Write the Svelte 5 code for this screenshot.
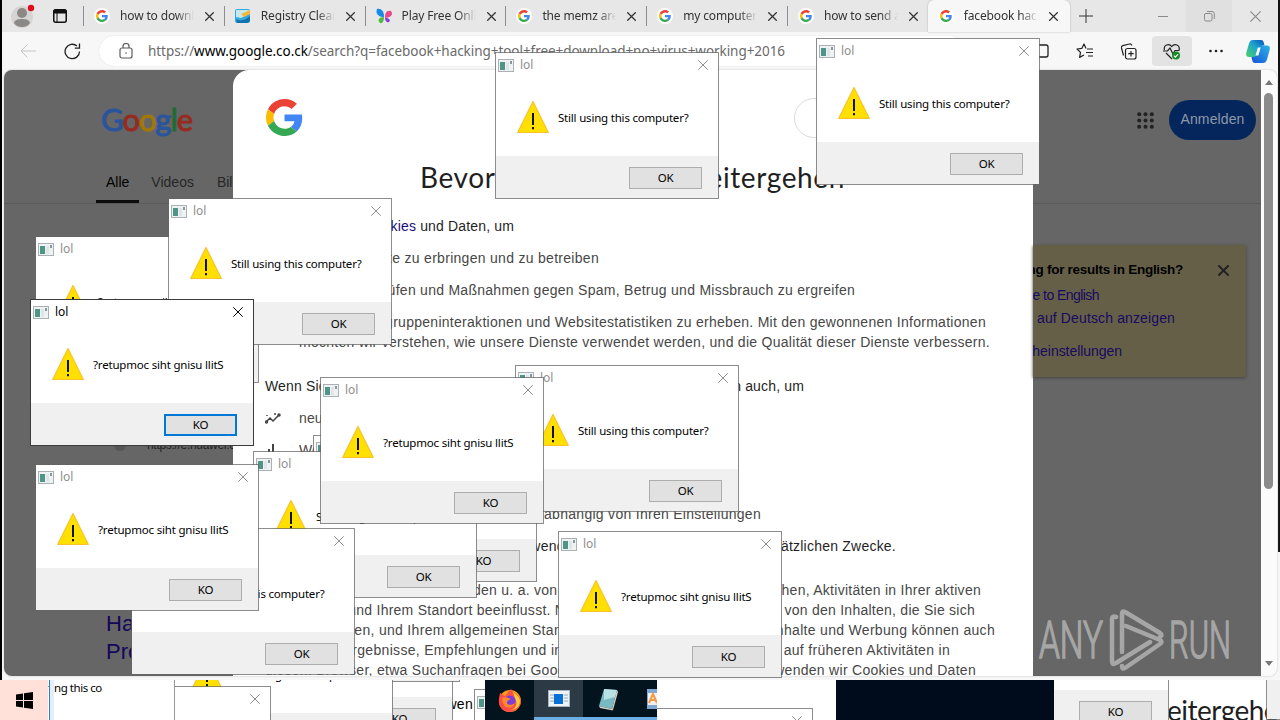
<script lang="ts">
  interface Tab {
    title: string;
    icon: 'google' | 'registry' | 'msn';
    active?: boolean;
  }

  interface Dialog {
    x: number;
    y: number;
    reversed?: boolean;
    focused?: boolean;
  }

  const tabs: Tab[] = [
    { title: 'how to download', icon: 'google' },
    { title: 'Registry Cleaner', icon: 'registry' },
    { title: 'Play Free Online', icon: 'msn' },
    { title: 'the memz are real', icon: 'google' },
    { title: 'my computer is', icon: 'google' },
    { title: 'how to send a virus', icon: 'google' },
    { title: 'facebook hacking', icon: 'google', active: true }
  ];

  // bottom to top
  const dialogs: Dialog[] = [
    { x: 35, y: 236, reversed: true },
    { x: 168, y: 198 },
    { x: 30, y: 299, reversed: true, focused: true },
    { x: 313, y: 435, reversed: true },
    { x: 515, y: 365 },
    { x: 253, y: 451 },
    { x: 320, y: 377, reversed: true },
    { x: 131, y: 528 },
    { x: 35, y: 464, reversed: true },
    { x: 558, y: 531, reversed: true },
    { x: 495, y: 52 },
    { x: 816, y: 38 }
  ];

  const firstList = [
    [{ text: 'Google-Dienste zu erbringen und zu betreiben', w: 300 }],
    [{ text: 'Ausfälle zu prüfen und Maßnahmen gegen Spam, Betrug und Missbrauch zu ergreifen', w: 556 }],
    [
      { text: 'Daten zu Zielgruppeninteraktionen und Websitestatistiken zu erheben. Mit den gewonnenen Informationen', w: 687 },
      { text: 'möchten wir verstehen, wie unsere Dienste verwendet werden, und die Qualität dieser Dienste verbessern.', w: 691 }
    ]
  ];

  const secondList = [
    { text: 'neue Dienste zu entwickeln und zu verbessern', w: 296 },
    { text: 'Werbung auszuliefern und ihre Wirksamkeit zu messen', w: 350 },
    { text: 'personalisierte Inhalte anzuzeigen, abhängig von Ihren Einstellungen', w: 438 },
    { text: 'personalisierte Werbung anzuzeigen, abhängig von Ihren Einstellungen', w: 462 }
  ];

  const details = [
    { text: 'Nicht personalisierte Inhalte werden u. a. von Inhalten, die Sie sich gerade ansehen, Aktivitäten in Ihrer aktiven', w: 716 },
    { text: 'Suchsitzung und Ihrem Standort beeinflusst. Nicht personalisierte Werbung wird von den Inhalten, die Sie sich', w: 710 },
    { text: 'gerade ansehen, und Ihrem allgemeinen Standort beeinflusst. Personalisierte Inhalte und Werbung können auch', w: 730 },
    { text: 'relevantere Ergebnisse, Empfehlungen und individuelle Werbung enthalten, die auf früheren Aktivitäten in', w: 685 },
    { text: 'diesem Browser, etwa Suchanfragen bei Google, basieren. Darüber hinaus verwenden wir Cookies und Daten', w: 711 }
  ];

  // spreads a line of text over a given width
  function fit(node: HTMLElement, width: number) {
    const n = (node.textContent ?? '').trim().length;
    const natural = node.getBoundingClientRect().width;
    node.style.letterSpacing = (width - natural) / n + 'px';
  }
</script>

{#snippet googleG(size: number)}
  <svg width={size} height={size} viewBox="2 2 44 44">
    <path fill="#ea4335" d="M24 9.5c3.5 0 6.7 1.2 9.2 3.6l6.9-6.9C35.9 2.4 30.5 0 24 0 14.6 0 6.5 5.4 2.6 13.2l8 6.2C12.400 13.700 17.700 9.500 24 9.500z" transform="translate(2 2) scale(.917)" />
    <path fill="#4285f4" d="M47 24.600c0-1.600-.2-3.100-.4-4.600H24v9h12.900c-.6 3-2.200 5.500-4.700 7.200l7.700 6c4.500-4.200 7.100-10.400 7.100-17.600z" transform="translate(2 2) scale(.917)" />
    <path fill="#fbbc05" d="M10.500 28.600c-.5-1.500-.8-3-.8-4.600s.3-3.100.8-4.600l-8-6.200C.9 16.500 0 20.100 0 24s.9 7.500 2.600 10.800z" transform="translate(2 2) scale(.917)" />
    <path fill="#34a853" d="M24 48c6.500 0 11.900-2.100 15.900-5.800l-7.700-6c-2.200 1.400-4.900 2.300-8.200 2.300-6.300 0-11.600-4.200-13.500-9.900l-8 6.200C6.500 42.600 14.600 48 24 48z" transform="translate(2 2) scale(.917)" />
  </svg>
{/snippet}

{#snippet cross(size: number)}
  <svg width={size} height={size} viewBox="0 0 10 10" fill="none" stroke="currentColor">
    <path d="M.3.3l9.400 9.400M9.700.3L.3 9.700" />
  </svg>
{/snippet}

{#snippet dialog(d: Dialog)}
  <div class="dialog" class:focused={d.focused} style="left:{d.x}px;top:{d.y}px">
    <div class="titlebar">
      <svg width="16" height="13" viewBox="0 0 16 13">
        <rect x=".5" y=".5" width="15" height="12" fill="#eef2f2" stroke="#a9b1b4" />
        <rect x="2" y="3" width="5" height="8" fill="#4f9486" />
        <rect x="8" y="3" width="3" height="8" fill="#dfe6e8" />
        <rect x="12" y="2" width="2" height="3" fill="#8d979b" />
      </svg>
      <span class="caption">lol</span>
      {@render cross(10)}
    </div>
    <div class="message">
      <svg width="34" height="34" viewBox="0 0 34 34">
        <path d="M17 1.500L32.300 32.500H1.700z" fill="#ffe000" stroke="#f9c22b" stroke-width="1.200" stroke-linejoin="round" />
        <path d="M16 13h2v12h-2zM16 27h2v2.200h-2z" fill="#111" />
      </svg>
      <span use:fit={130.5}>{d.reversed ? '?retupmoc siht gnisu llitS' : 'Still using this computer?'}</span>
    </div>
    <div class="actions">
      <button>{d.reversed ? 'KO' : 'OK'}</button>
    </div>
  </div>
{/snippet}

<div class="desktop">
  <div class="browser">
    <div class="tabstrip">
      <div class="profile">
        <svg width="24" height="24" viewBox="0 0 24 24">
          <circle cx="11" cy="13" r="11" fill="#d6d4d2" />
          <circle cx="11" cy="9" r="5" fill="#8b8886" />
          <path d="M3 19c1-3.500 4-4 8-4s7 .5 8 4c-2 3-5 4-8 4s-6-1-8-4z" fill="#8b8886" />
          <circle cx="20" cy="4" r="3.200" fill="#e00b1c" />
        </svg>
      </div>
      <svg class="workspace" width="14" height="14" viewBox="0 0 14 14">
        <rect x=".75" y=".75" width="12.500" height="12.500" rx="2" fill="none" stroke="#111" stroke-width="1.500" />
        <path d="M1 1h12v3H1zM4 3v10" stroke="#111" fill="#111" />
      </svg>
      {#each tabs as tab}
        <div class="tab" class:active={tab.active}>
          <span class="favicon" class:round={tab.icon === 'google'}>
            {#if tab.icon === 'google'}
              {@render googleG(12)}
            {:else if tab.icon === 'registry'}
              <svg width="16" height="16" viewBox="0 0 16 16">
                <rect y="1" width="15" height="14" rx="2" fill="#35a9dc" />
                <path d="M1 2h13v4L6 10 1 9z" fill="#c3e9ee" />
                <path d="M6 6l9-4v4l-6 3z" fill="#f4b63c" />
                <path d="M1 11c5 3 9 1 14-3v5l-3 2H2z" fill="#1173ad" />
              </svg>
            {:else}
              <svg width="16" height="16" viewBox="0 0 16 16">
                <path d="M1 1c5-1 7 3 7 8C3 9-1 6 1 1z" fill="#168be6" />
                <path d="M15 3c-5-1-6 3-6 7 5 0 9-3 6-7z" fill="#e64a8b" />
                <path d="M8 9c-5 0-7 3-4 6 3 1 4-3 4-6z" fill="#55b944" />
                <path d="M9 10c4 0 6 2 4 4-2 1-4-1-4-4z" fill="#7a43d1" />
              </svg>
            {/if}
          </span>
          <span class="tab-title">{tab.title}</span>
          {@render cross(9)}
        </div>
      {/each}
      <svg class="new-tab" width="14" height="14" viewBox="0 0 14 14"><path d="M7 0v14M0 7h14" stroke="#333" /></svg>
      <div class="window-buttons">
        <span><svg width="10" height="10" viewBox="0 0 10 10"><path d="M0 5.500h10" stroke="#8a8a8a" /></svg></span>
        <span class="hover">
          <svg width="11" height="11" viewBox="0 0 11 11" fill="none" stroke="#8a8a8a">
            <rect x=".5" y="2.500" width="7.500" height="7.500" rx="1.500" />
            <path d="M3 .5h5a2.200 2.200 0 0 1 2.300 2.200V8" />
          </svg>
        </span>
        <span class="close">{@render cross(11)}</span>
      </div>
    </div>

    <div class="toolbar">
      <svg class="back" width="16" height="14" viewBox="0 0 16 14" fill="none" stroke="#c6c6c6"><path d="M7.500.5L1 7l6.500 6.500M1 7h15" /></svg>
      <svg class="reload" width="17" height="17" viewBox="0 0 17 17" fill="none" stroke="#222" stroke-width="1.300">
        <path d="M15.500 8.500A7.200 7.200 0 1 1 13 3M15.500.5v4.700h-4.700" />
      </svg>
      <div class="address">
        <svg width="14" height="16" viewBox="0 0 14 16" fill="none" stroke="#5c5c5c" stroke-width="1.200">
          <rect x="1" y="5" width="12" height="10" rx="2" />
          <path d="M4 5V3.500a3 3 0 0 1 6 0V5" />
          <circle cx="7" cy="10" r=".8" fill="#5c5c5c" stroke="none" />
        </svg>
        <span class="url" use:fit={637}>https://<b>www.google.co.ck</b>/search?q=facebook+hacking+tool+free+download+no+virus+working+2016</span>
      </div>
      <div class="tools">
        <svg width="16" height="14" viewBox="0 0 16 14" fill="none" stroke="#222" stroke-width="1.300"><rect x="1" y="1" width="14" height="12" rx="2" /></svg>
        <svg width="18" height="16" viewBox="0 0 18 16" fill="none" stroke="#222" stroke-width="1.200" stroke-linejoin="round">
          <path d="M10 5.500L8 1 5.800 5.400 1 6l3.500 3.400-.9 5L8 12M11 6h6M10 9.500h7M12 13h5" />
        </svg>
        <svg width="17" height="17" viewBox="0 0 17 17" fill="none" stroke="#222" stroke-width="1.200" stroke-linejoin="round">
          <rect x="5.500" y="5.500" width="10.500" height="10.500" rx="2" />
          <path d="M11 8v5.500M8.200 10.700h5.500M3.500 12.500L1.500 5c-.3-1.300.2-2 1.300-2.300L9.500 1c1.200-.3 2 .3 2.300 1.500" />
        </svg>
        <span class="essentials">
          <svg width="18" height="17" viewBox="0 0 18 17" fill="none" stroke="#222" stroke-width="1.200">
            <path d="M1.500 7C0 2 6 0 8.800 3.500 11.500 0 17.500 2 16 7M3 10l6 6M0 8h4.500L7 5l3 6 2-3.500h4.500" />
            <circle cx="13" cy="12.500" r="4" fill="#178a2a" stroke="none" />
            <path d="M11 12.700l1.400 1.400 2.700-2.900" stroke="#fff" stroke-width="1.100" />
          </svg>
        </span>
        <svg width="14" height="4" viewBox="0 0 14 4" fill="#222"><circle cx="1.500" cy="2" r="1.300" /><circle cx="7" cy="2" r="1.300" /><circle cx="12.500" cy="2" r="1.300" /></svg>
        <svg width="24" height="23" viewBox="0 0 24 23">
          <defs>
            <linearGradient id="cp1" x1="1" y1="0" x2="0" y2="1">
              <stop offset="0" stop-color="#0a4fc4" /><stop offset=".45" stop-color="#1ba6c9" /><stop offset="1" stop-color="#4fd06a" />
            </linearGradient>
            <linearGradient id="cp2" x1="1" y1="0" x2="0" y2="1">
              <stop offset="0" stop-color="#2cb5e4" /><stop offset="1" stop-color="#1752d8" />
            </linearGradient>
          </defs>
          <path d="M7 0h8c2 0 2.500 1.500 3 3.500l.5 2c-3 0-4 .5-5 4l-1.500 5c-.8 2-2 2.500-4 2.500H3c-3 0-3.300-2.300-2.500-5L3 3.500C3.800 1 5 0 7 0z" fill="url(#cp1)" />
          <path d="M17 23H9c-2 0-2.500-1.500-3-3.500L5.500 17c3.500 0 5-.5 6-4l1.500-4.500c.8-2 2-3 4-3h4c3 0 3.300 2.300 2.500 5l-2.500 9c-.8 2.500-2 3.500-4 3.500z" fill="url(#cp2)" />
          <path d="M9.500 15.500l2.300-8h2.900l-2.300 8z" fill="#f5fbff" />
        </svg>
      </div>
    </div>

    <div class="content">
      <div class="page">
        <div class="results">
          <div class="logo" use:fit={91}><i class="b">G</i><i class="r">o</i><i class="y">o</i><i class="b">g</i><i class="g">l</i><i class="r">e</i></div>
          <nav><span class="on">Alle</span><span>Videos</span><span>Bilder</span></nav>
          <div class="hit">
            <span class="hit-icon"></span>
            <span class="hit-url" use:fit={104}>https://e.huawei.com</span>
          </div>
          <h3>Hacking</h3>
          <h3>Programm</h3>
        </div>
        <section class="consent">
          <header>
            {@render googleG(37)}
            <span class="lang"></span>
          </header>
          <h1><span use:fit={425}>Bevor Sie zu Google weitergehen</span></h1>
          <p class="line"><span use:fit={249}>Wir verwenden <a href="#cookies">Cookies</a> und Daten, um</span></p>
          <ul>
            {#each firstList as item}
              <li>{#each item as line}<div class="line"><span use:fit={line.w}>{line.text}</span></div>{/each}</li>
            {/each}
          </ul>
          <p class="line spaced"><span use:fit={539}>Wenn Sie „Alle akzeptieren“ auswählen, verwenden wir Cookies und Daten auch, um</span></p>
          <ul>
            {#each secondList as item, i}
              <li>
                {#if i === 0}
                  <svg class="bullet" width="16" height="12" viewBox="0 0 16 12" fill="none" stroke="#444" stroke-width="1.500"><path d="M1 10l4-4 3 3 6-6M10 1v2M2 3v1" /><circle cx="1.500" cy="10" r="1" /><circle cx="14" cy="3" r="1" /></svg>
                {:else if i === 1}
                  <svg class="bullet" width="16" height="12" viewBox="0 0 16 12" fill="#444"><path d="M3 5h2v7H3zM7 0h2v12H7zM11 8h2v4h-2z" /></svg>
                {/if}
                <div class="line"><span use:fit={item.w}>{item.text}</span></div>
              </li>
            {/each}
          </ul>
          <p class="line after"><span use:fit={631}>Wenn Sie „Alle ablehnen“ auswählen, verwenden wir Cookies nicht für diese zusätzlichen Zwecke.</span></p>
          <div class="details">
            {#each details as line}
              <div class="line"><span use:fit={line.w}>{line.text}</span></div>
            {/each}
          </div>
        </section>
        <aside>
          <div class="account">
            <svg width="17" height="17" viewBox="0 0 17 17" fill="#222">
              {#each [2.2, 8.5, 14.800] as cy}
                {#each [2.2, 8.5, 14.800] as cx}
                  <circle {cx} {cy} r="2" />
                {/each}
              {/each}
            </svg>
            <span class="signin"><span use:fit={64}>Anmelden</span></span>
          </div>
          <div class="language">
            <div class="question">
              <span use:fit={190}>Looking for results in English?</span>
              {@render cross(11)}
            </div>
            <div class="first"><span use:fit={105}>Change to English</span></div>
            <div class="second"><span use:fit={183}>Weiter auf Deutsch anzeigen</span></div>
            <div class="third"><span use:fit={126}>Spracheinstellungen</span></div>
          </div>
          <svg class="watermark" width="194" height="64" viewBox="0 0 194 64">
            <text x="0" y="49" textLength="64" lengthAdjust="spacingAndGlyphs">ANY</text>
            <text x="130" y="49" textLength="62" lengthAdjust="spacingAndGlyphs">RUN</text>
            <path d="M77 8c-3-1-4 0-4 2v42c0 3 1 4 4 2l34-21M83 43V5c0-3 1-3 3-2l35 21c2 1 2 3 0 4M87 17l34 14c2 1 2 3 0 4L86 59c-2 1-3 1-3-2" />
          </svg>
        </aside>
      </div>
      <div class="scrollbar">
        <i class="up"></i>
        <i class="thumb"></i>
        <i class="down"></i>
      </div>
    </div>
  </div>

  <div class="taskbar">
    <div class="start">
      <svg width="17" height="17" viewBox="0 0 17 17"><path d="M0 2.500l7-1V8H0zM8 1.300L17 0v8H8zM0 9h7v6.500l-7-1zM8 9h9v8l-9-1.300z" /></svg>
    </div>
    <div class="slice tangled">
      <span class="under">verwen</span>
      {@render dialog({ x: 181, y: -87, reversed: true })}
      {@render dialog({ x: 188, y: -145 })}
      {@render dialog({ x: 121, y: -71 })}
      {@render dialog({ x: -1, y: 6 })}
      {@render dialog({ x: 426, y: 9 })}
      <div class="fragment"><span>ng this co</span></div>
    </div>
    <div class="slice apps">
      <span>
        <svg width="24" height="24" viewBox="0 0 24 24">
          <circle cx="12" cy="13" r="11" fill="#ff9b1f" />
          <path d="M2 5c3 1 4 3 5 3 2-1 3-4 6-7 1 4 9 5 10 12-1 8-7 11-12 11C4 24 0 18 1 11z" fill="#ff4f45" />
          <path d="M14 2c1 4 8 5 8 11s-5 9-9 9c5-2 7-6 4-12z" fill="#ffc93b" />
          <circle cx="12" cy="13" r="5.500" fill="#7a3fd8" />
          <path d="M4 10c4-2 6 0 9 1-2 1-3 1-4 3-1 3 5 4 8 1-1 5-10 7-12 0z" fill="#ff8a2a" />
        </svg>
      </span>
      <span class="running current">
        <svg width="22" height="17" viewBox="0 0 22 17">
          <rect x=".5" y=".5" width="21" height="16" fill="#eef3f8" stroke="#a7b4c0" />
          <path d="M2 5h4M2 8h4M2 11h4M16 5h4M16 8h4M16 11h4" stroke="#9ab" />
          <rect x="6" y="4" width="9" height="10" fill="#0a6fd6" />
        </svg>
      </span>
      <span class="running">
        <svg width="24" height="24" viewBox="0 0 24 24">
          <path d="M8 2l13 1-5 19-13-3z" fill="#79b9c4" />
          <path d="M8 2l13 1-2 7-11 3z" fill="#b9e0e4" />
          <path d="M3 19l13 3 1 1.500L4 21zM21 3l1 2-5 18-1-1z" fill="#d8d3c2" />
        </svg>
      </span>
      <span class="running last">
        <svg width="18" height="20" viewBox="0 0 18 20">
          <rect width="18" height="20" fill="#7ea8d2" />
          <rect x="1" y="4" width="16" height="12" fill="#f4f1ec" />
          <path d="M2 14l4-9 4 9M3.500 11h5" stroke="#f09a4a" stroke-width="2" fill="none" />
        </svg>
      </span>
    </div>
    <div class="slice gap">{@render dialog({ x: -68, y: 28 })}</div>
    <div class="slice empty"></div>
    <div class="slice ko">{@render dialog({ x: -109, y: -94, reversed: true })}</div>
    <div class="slice tail">
      <span class="heading-bit">eitergehen</span>
      {@render dialog({ x: 97, y: -107 })}
    </div>
  </div>

  {#each dialogs as d}
    {@render dialog(d)}
  {/each}
</div>

<style>
  :global(body) { overflow: hidden; }

  .desktop {
    position: relative;
    display: flex;
    flex-direction: column;
    width: 1280px;
    height: 720px;
    overflow: hidden;
    background: #fff;
    font-family: 'Noto Sans', 'Open Sans', sans-serif;
    font-size: 12px;
  }
  svg { display: block; flex: none; }
  i { font-style: normal; }

  .browser {
    display: flex;
    flex-direction: column;
    height: 680px;
    box-sizing: border-box;
    padding: 0 2px;
    background:
      linear-gradient(#000, #000) left / 2px 100% no-repeat,
      linear-gradient(#111, #111) right top / 2px 552px no-repeat,
      #f7f7f7;
  }

  /* Tabs */
  .tabstrip {
    display: flex;
    align-items: center;
    height: 32px;
    background: #e7e7e7;
  }
  .profile { width: 24px; margin: -1px 0 0 9px; }
  .workspace { margin: 0 16px 0 18px; }
  .tab {
    display: flex;
    align-items: center;
    box-sizing: border-box;
    width: 140.800px;
    height: 32px;
    padding-left: 9px;
    color: #333;
  }
  .tab::before {
    content: '';
    width: 1px;
    height: 20px;
    margin-left: -9px;
    margin-right: 7px;
    background: #8d8d8d;
  }
  .tab.active { background: #f7f7f7; border-radius: 6px 6px 0 0; width: 142px; box-shadow: 0 0 2px #aaa; }
  .tab.active::before { background: none; margin-right: 6px; }
  .favicon { width: 16px; height: 16px; margin-left: 3px; display: grid; place-items: center; }
  .favicon.round { background: #fff; border-radius: 50%; }
  .tab-title {
    width: 74px;
    margin: -1px 11px 0 10px;
    overflow: hidden;
    white-space: nowrap;
    font-size: 12px;
    letter-spacing: -.15px;
    -webkit-mask-image: linear-gradient(90deg, #000 76%, transparent 100%);
    mask-image: linear-gradient(90deg, #000 76%, transparent 100%);
  }
  .tab > :global(svg) { stroke-width: 1.400; }
  .new-tab { margin-left: 9px; }
  .window-buttons { display: flex; margin-left: auto; height: 32px; color: #888; }
  .window-buttons span { width: 46px; display: grid; place-items: center; }
  .window-buttons .hover { background: #e0e0e0; }

  /* Toolbar */
  .toolbar { display: flex; align-items: center; height: 38px; }
  .back { margin-left: 18px; }
  .reload { margin-left: 28px; }
  .address {
    display: flex;
    align-items: center;
    width: 866px;
    height: 30px;
    margin-left: 18px;
    border-radius: 15px;
    background: #fff;
    box-sizing: border-box;
    padding-left: 20px;
    box-shadow: 0 0 1px #ccc;
  }
  .url { margin-left: 15px; font-size: 13.500px; color: #6a6a6a; white-space: nowrap; }
  .url b { font-weight: 400; color: #000; }
  .tools { display: flex; align-items: center; margin-left: auto; padding-right: 8px; }
  .tools > svg:nth-child(1) { margin-right: 27px; }
  .tools > svg:nth-child(2) { margin-right: 26px; }
  .tools > svg:nth-child(3) { margin-right: 15px; }
  .essentials { width: 40px; height: 30px; border-radius: 4px; background: #e3e3e3; display: grid; place-items: center; }
  .tools > svg:nth-child(5) { margin: 0 23px 0 17px; }

  /* Page */
  .content {
    display: flex;
    height: 606px;
    margin-left: 2px;
    margin-right: 1px;
    border-radius: 8px;
    overflow: hidden;
    box-shadow: 0 0 2px #bbb;
    background: #fbfbfb;
  }
  .page {
    display: flex;
    width: 1257px;
    background: linear-gradient(#5a5a5a, #5a5a5a) 0 133px / 100% 1px no-repeat #666;
    font-family: 'Liberation Sans', Arial, sans-serif;
    font-size: 14px;
  }
  .results { width: 229px; overflow: hidden; }
  .logo {
    width: max-content;
    margin: 29px 0 0 97px;
    height: 43px;
    font: 400 31px/40px Lato, sans-serif;
    -webkit-text-stroke: 1px;
  }
  .logo .b { color: #2a549c; }
  .logo .r { color: #962b22; }
  .logo .y { color: #a0780a; }
  .logo .g { color: #216b35; }
  nav {
    display: flex;
    gap: 23px;
    margin: 23px 0 0 92px;
    height: 38px;
    line-height: 34px;
    color: #262626;
  }
  nav .on { color: #000; border-bottom: 3px solid #0c0c0c; padding: 0 10px; margin-right: -11px; height: 35px; }
  .hit { display: flex; align-items: center; height: 20px; margin: 232px 0 0 110px; color: #222; font-size: 12px; white-space: nowrap; }
  .hit-icon { flex: none; width: 12px; height: 12px; border-radius: 50%; background: #565656; margin-right: 21px; }
  h3 { margin: 0 0 0 102px; font-size: 22px; line-height: 28px; font-weight: 400; color: #13085a; }
  .hit + h3 { margin-top: 155px; }

  .consent { width: 800px; box-sizing: border-box; padding: 0 32px; background: #fff; border-radius: 16px 0 0 0; color: #1f1f1f; }
  .consent header { display: flex; justify-content: space-between; padding-top: 28px; height: 40px; }
  .consent header > :global(svg) { margin: 1px 0 0 1px; }
  .lang { width: 172px; height: 38px; border: 1px solid #dadce0; border-radius: 20px; margin-right: 33px; }
  h1 { margin: 19px 0 19px 155px; font: 400 28px/40px Lato, sans-serif; white-space: nowrap; color: #1f1f1f; }
  p { margin: 0; }
  .line { height: 20px; line-height: 20px; white-space: nowrap; }
  .line a { color: #1a0d7a; text-decoration: none; }
  ul { list-style: none; margin: 12px 0 0; padding: 0 0 0 34px; color: #474747; }
  li { margin-bottom: 12px; position: relative; }
  .bullet { position: absolute; left: -34px; top: 4px; }
  .spaced { margin-top: 24px; }
  .details { margin-top: 24px; color: #474747; }

  aside { width: 228px; display: flex; flex-direction: column; }
  .account { display: flex; align-items: center; justify-content: flex-end; gap: 15px; padding: 30px 5px 0 0; }
  .signin { width: 87px; height: 40px; border-radius: 20px; background: #04265c; color: #8f98a9; display: grid; place-items: center; padding-bottom: 2px; box-sizing: border-box; }
  .language {
    height: 132px;
    box-sizing: border-box;
    margin: 105px 15px 0 0;
    padding: 15px 17px 0 0;
    background: #665f48;
    box-shadow: 0 1px 3px #444;
    color: #160a60;
    line-height: 20px;
    overflow: hidden;
    white-space: nowrap;
  }
  .language > div { padding-bottom: 5px; }
  .language .question { display: flex; align-items: center; justify-content: space-between; margin-left: -40px; color: #000; font-size: 13.500px; font-weight: 700; }
  .question > :global(svg) { color: #222; stroke-width: 1.800; }
  .language .first { margin-left: -39px; }
  .language .second { padding-bottom: 13px; margin: -2px 0 0 -41px; }
  .language .third { margin-left: -37px; }
  .watermark { margin: 232px 0 0 6px; }
  .watermark text { font: 300 51px Roboto, sans-serif; fill: #a6a6a6; stroke: #a6a6a6; stroke-width: 1.500; }
  .watermark path { fill: none; stroke: #a6a6a6; stroke-width: 4.500; stroke-linecap: round; stroke-linejoin: round; }

  .scrollbar { display: flex; flex-direction: column; align-items: center; width: 15px; padding-top: 10px; box-sizing: border-box; }
  .scrollbar i { border: 4.500px solid transparent; }
  .scrollbar .up { border-bottom: 5px solid #777; border-top: 0; }
  .scrollbar .thumb { width: 9px; height: 396px; border: 0; border-radius: 5px; background: #8b8b8b; margin-top: 8px; }
  .scrollbar .down { border-top: 5px solid #777; border-bottom: 0; margin: auto 0 10px; }

  /* Taskbar */
  .taskbar { display: flex; height: 40px; }
  .start { width: 48px; display: grid; place-items: center; background: #ffe1da; }
  .slice { position: relative; overflow: hidden; background: #fff; }
  .tangled { width: 437px; }
  .under { position: absolute; right: 12px; top: 16px; font: 14px 'Liberation Sans', sans-serif; letter-spacing: .3px; }
  .fragment {
    position: absolute;
    left: 1px;
    top: 0;
    width: 126px;
    height: 40px;
    background: linear-gradient(90deg, #2a7fc0 0 1px, #e3eefa 1px 5px, #fff 5px);
    border-right: 1px solid #999;
    box-sizing: border-box;
    padding-left: 5px;
  }
  .fragment span { font-size: 11.500px; line-height: 16px; letter-spacing: -.45px; display: block; }
  .apps { display: flex; width: 172px; background: #04141f; }
  .apps span { width: 49px; height: 40px; flex: none; display: grid; place-items: center; box-sizing: border-box; }
  .apps .running { border-bottom: 3px solid #6aaee6; }
  .apps .current { background: #2c3a45; }
  .apps .last { justify-items: start; padding-left: 15px; }
  .gap { width: 179px; }
  .empty { width: 218px; background: #000b1b; }
  .ko { width: 115px; }
  .tail { width: 111px; }
  .heading-bit { display: block; margin-left: -2px; font: 28px/61px Lato, sans-serif; letter-spacing: -.5px; color: #1f1f1f; }

  /* Message boxes */
  .dialog {
    position: absolute;
    width: 224px;
    height: 147px;
    box-sizing: border-box;
    border: 1px solid rgba(102, 102, 102, .75);
    background: #fff;
    background-clip: padding-box;
    color: #000;
  }
  .titlebar { display: flex; align-items: center; height: 24px; padding: 0 10px 0 2px; color: #8f8f8f; }
  .titlebar .caption { margin: 0 auto 0 6px; font-size: 12px; line-height: 16px; }
  .message { display: flex; align-items: center; height: 79px; padding: 0 0 0 20px; }
  .message span { margin: 2px 0 0 8px; white-space: nowrap; font-size: 11.500px; }
  .actions { height: 42px; background: #f0f0f0; display: flex; justify-content: flex-end; padding-right: 16px; }
  button {
    width: 73px;
    height: 22px;
    margin-top: 11px;
    padding: 0 0 1px;
    border: 1px solid #adadad;
    border-radius: 0;
    background: #e1e1e1;
    font: 11.500px/18px 'Noto Sans', sans-serif;
    letter-spacing: -.3px;
    color: #000;
  }
  .focused { border-color: #3c3c3c; }
  .focused .titlebar { color: #000; }
  .focused button { border: 2px solid #0078d7; line-height: 16px; }
</style>
